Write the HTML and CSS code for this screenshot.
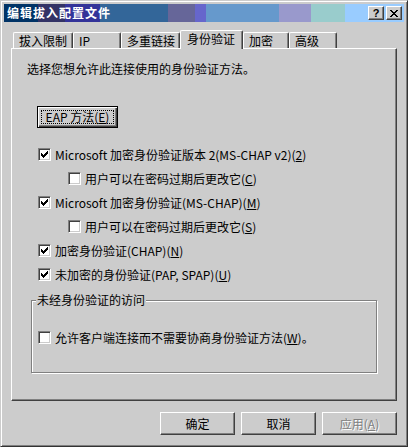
FILE: index.html
```html
<!DOCTYPE html>
<html lang="zh-CN">
<head>
<meta charset="utf-8">
<title>编辑拔入配置文件</title>
<link rel="stylesheet" href="styles.css">
</head>
<body>
<div class="window">
  <div class="titlebar">
    <span class="title">编辑拔入配置文件</span>
    <div class="caption-btns">
      <span class="cap-btn help">?</span>
      <span class="cap-btn close"><svg width="8" height="7" viewBox="0 0 8 7"><path d="M0 0h2v1h1v1h2v-1h1v-1h2v1h-1v1h-1v1h-1v1h1v1h1v1h1v1h-2v-1h-1v-1h-2v1h-1v1h-2v-1h1v-1h1v-1h1v-1h-1v-1h-1v-1h-1z" fill="#000"/></svg></span>
    </div>
  </div>
  <div class="content">
    <div class="tabs">
      <div class="tab tab-dialin">拔入限制</div>
      <div class="tab tab-ip">IP</div>
      <div class="tab tab-multi">多重链接</div>
      <div class="tab tab-auth selected">身份验证</div>
      <div class="tab tab-enc">加密</div>
      <div class="tab tab-adv">高级</div>
    </div>
    <div class="panel">
      <p class="intro">选择您想允许此连接使用的身份验证方法。</p>
      <button class="btn btn-default eap"><span class="focus">EAP 方法(<u>E</u>)</span></button>
      <div class="opts">
        <div class="opt"><span class="cb"><svg class="chk" width="7" height="7" viewBox="0 0 7 7"><path d="M0 2H1V3H2V4H3V3H4V2H5V1H6V0H7V3H6V4H5V5H4V6H3V7H2V6H1V5H0Z" fill="#000"/></svg></span><span>Microsoft 加密身份验证版本 2(MS-CHAP v2)(<u>2</u>)</span></div>
        <div class="opt sub"><span class="cb"></span><span>用户可以在密码过期后更改它(<u>C</u>)</span></div>
        <div class="opt"><span class="cb"><svg class="chk" width="7" height="7" viewBox="0 0 7 7"><path d="M0 2H1V3H2V4H3V3H4V2H5V1H6V0H7V3H6V4H5V5H4V6H3V7H2V6H1V5H0Z" fill="#000"/></svg></span><span>Microsoft 加密身份验证(MS-CHAP)(<u>M</u>)</span></div>
        <div class="opt sub"><span class="cb"></span><span>用户可以在密码过期后更改它(<u>S</u>)</span></div>
        <div class="opt"><span class="cb"><svg class="chk" width="7" height="7" viewBox="0 0 7 7"><path d="M0 2H1V3H2V4H3V3H4V2H5V1H6V0H7V3H6V4H5V5H4V6H3V7H2V6H1V5H0Z" fill="#000"/></svg></span><span>加密身份验证(CHAP)(<u>N</u>)</span></div>
        <div class="opt"><span class="cb"><svg class="chk" width="7" height="7" viewBox="0 0 7 7"><path d="M0 2H1V3H2V4H3V3H4V2H5V1H6V0H7V3H6V4H5V5H4V6H3V7H2V6H1V5H0Z" fill="#000"/></svg></span><span>未加密的身份验证(PAP, SPAP)(<u>U</u>)</span></div>
      </div>
      <fieldset class="group">
        <legend>未经身份验证的访问</legend>
        <div class="opt"><span class="cb"></span><span>允许客户端连接而不需要协商身份验证方法(<u>W</u>)。</span></div>
      </fieldset>
    </div>
    <div class="footer">
      <button class="btn">确定</button>
      <button class="btn">取消</button>
      <button class="btn disabled">应用(<u>A</u>)</button>
    </div>
  </div>
</div>
</body>
</html>
```
FILE: styles.css
```css
html, body {
  margin: 0;
  padding: 0;
  background: #cccccc;
}
body {
  font: 12px "Noto Sans CJK SC", "Noto Sans", sans-serif;
  color: #000;
}
.window {
  width: 408px;
  height: 447px;
  box-sizing: border-box;
  border: 1px solid;
  border-color: #cccccc #333333 #333333 #cccccc;
  box-shadow: inset 1px 1px 0 #fff, inset -1px -1px 0 #808080;
  padding: 3px;
  display: flex;
  flex-direction: column;
  background: #cccccc;
}
.titlebar {
  height: 18px;
  flex: none;
  display: flex;
  align-items: center;
  padding: 0 2px 0 3px;
  background: linear-gradient(to right,
    #003366 0 34px, #333366 34px 61px, #333399 61px 96px,
    #336699 96px 164px, #666699 164px 191px, #6666cc 191px 202px,
    #6699cc 202px 275px, #9999cc 275px 307px, #99cccc 307px 341px,
    #99ccff 341px);
}
.title {
  flex: 1;
  color: #fff;
  font-weight: bold;
  letter-spacing: 1px;
  line-height: 18px;
}
.caption-btns {
  display: flex;
  gap: 2px;
}
.cap-btn {
  width: 16px;
  height: 14px;
  box-sizing: border-box;
  background: #cccccc;
  border: 1px solid;
  border-color: #fff #404040 #404040 #fff;
  box-shadow: inset -1px -1px 0 #808080;
  display: flex;
  align-items: center;
  justify-content: center;
  font: bold 11px "Liberation Sans", sans-serif;
  line-height: 12px;
}
.cap-btn svg { display: block; }
.content {
  flex: 1;
  display: flex;
  flex-direction: column;
  padding: 8px 7px 0 7px;
}
.tabs {
  display: flex;
  align-items: flex-end;
  height: 18px;
  padding-left: 2px;
  position: relative;
  z-index: 1;
}
.tab {
  height: 16px;
  box-sizing: border-box;
  border-left: 1px solid #fff;
  border-top: 1px solid #fff;
  border-right: 1px solid #404040;
  border-radius: 2px 2px 0 0;
  box-shadow: inset -1px 0 0 #808080;
  padding-left: 5px;
  line-height: 15px;
  background: #cccccc;
  white-space: nowrap;
}
.tab.selected {
  height: 19px;
  margin-bottom: -1px;
  line-height: 16px;
  padding-left: 6px;
}
.tab-dialin { width: 60px; }
.tab-ip { width: 48px; }
.tab-multi { width: 59px; }
.tab-auth { width: 63px; }
.tab-enc { width: 46px; }
.tab-adv { width: 48px; }
.panel {
  height: 353px;
  box-sizing: border-box;
  border: 1px solid;
  border-color: #fff #404040 #404040 #fff;
  box-shadow: inset -1px -1px 0 #808080;
  display: flex;
  flex-direction: column;
  align-items: flex-start;
}
.intro {
  margin: 12px 0 0 15px;
  line-height: 16px;
}
.btn {
  width: 75px;
  height: 23px;
  box-sizing: border-box;
  font: inherit;
  color: #000;
  background: #cccccc;
  border: 1px solid;
  border-color: #fff #404040 #404040 #fff;
  box-shadow: inset -1px -1px 0 #808080;
  padding: 0;
  display: flex;
  align-items: center;
  justify-content: center;
}
.btn-default {
  border-color: #000;
  box-shadow: inset 1px 1px 0 #fff, inset -1px -1px 0 #404040, inset -2px -2px 0 #808080;
}
.eap {
  width: 81px;
  height: 22px;
  margin: 29px 0 0 25px;
}
.focus {
  display: flex;
  align-items: center;
  justify-content: center;
  width: 73px;
  height: 14px;
  box-sizing: border-box;
  border: 1px dotted #000;
  line-height: 12px;
}
.btn.disabled {
  color: #808080;
  text-shadow: 1px 1px 0 #fff;
}
.opts {
  margin-top: 14px;
  display: flex;
  flex-direction: column;
}
.opt {
  height: 24px;
  display: flex;
  align-items: center;
  padding-left: 26px;
  white-space: nowrap;
}
.opt.sub { padding-left: 56px; }
.cb {
  width: 13px;
  height: 13px;
  box-sizing: border-box;
  flex: none;
  border: 1px solid;
  border-color: #808080 #fff #fff #808080;
  box-shadow: inset 1px 1px 0 #404040, inset -1px -1px 0 #cccccc;
  background: #fff;
  padding: 2px;
  margin-right: 4px;
}
.chk { display: block; }
.group {
  align-self: stretch;
  margin: 7px 19px 0 19px;
  padding: 18px 0 0 0;
  height: 80px;
  box-sizing: border-box;
  border: 1px solid #808080;
  box-shadow: inset 1px 1px 0 #fff, 1px 1px 0 #fff;
}
.group legend {
  padding: 0 1px;
  margin-left: 4px;
  line-height: 14px;
  background: #cccccc;
}
.group .opt {
  padding-left: 6px;
}
.footer {
  display: flex;
  justify-content: flex-end;
  gap: 6px;
  margin-top: 11px;
}
```
